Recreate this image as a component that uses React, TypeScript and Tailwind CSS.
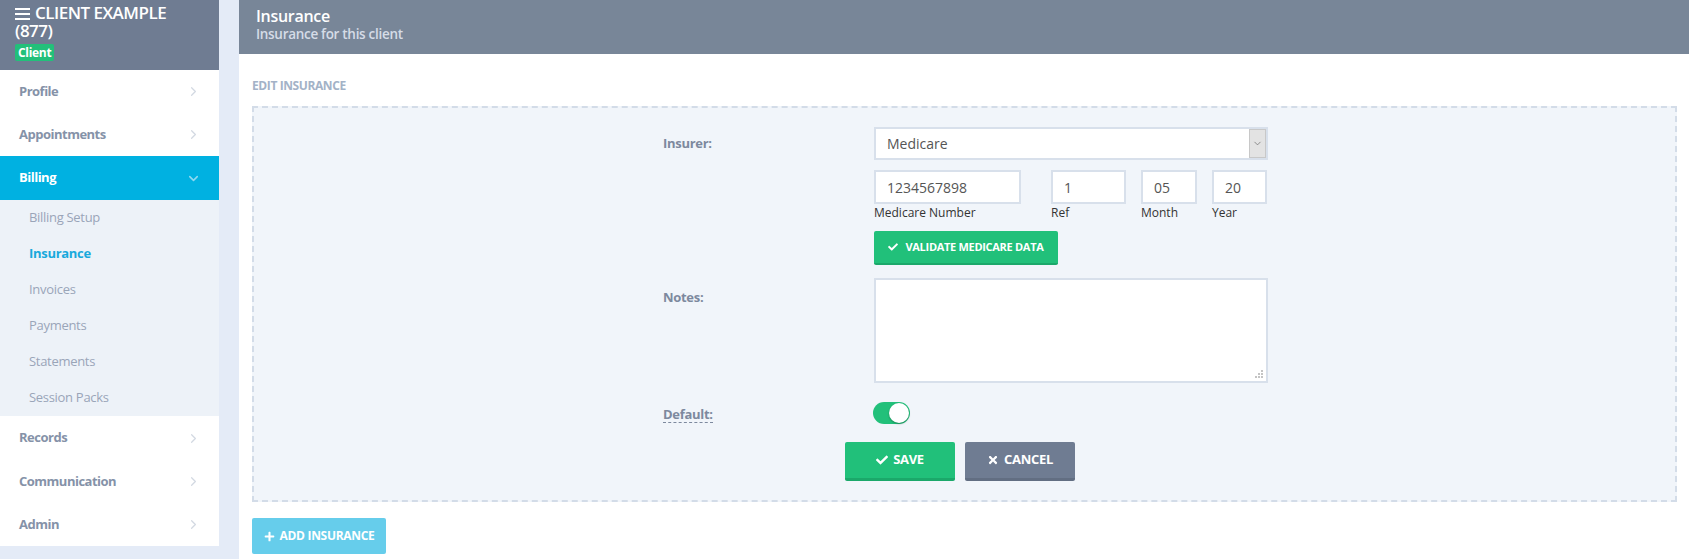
import React from "react";
import { ChevronRight, ChevronDown } from "lucide-react";
import { FaCheck, FaTimes, FaPlus } from "react-icons/fa";

const font = { fontFamily: '"Open Sans", "Noto Sans", sans-serif' };

function NavItem({ label, h }: { label: string; h: string }) {
  return (
    <div className={`flex items-center justify-between pl-[19px] pr-[18px] bg-white ${h}`}>
      <span className="text-[13px] font-bold text-[#8592a8] tracking-[-0.5px]">{label}</span>
      <ChevronRight size={15} strokeWidth={2} className="text-[#d3d9e2]" />
    </div>
  );
}

function SubItem({ label, active }: { label: string; active?: boolean }) {
  return (
    <div className="flex items-center h-[36px] pl-[29px]">
      <span
        className={`text-[13px] tracking-[-0.3px] ${active ? "font-bold text-[#19a9dc]" : "text-[#9aa5b8]"}`}
      >
        {label}
      </span>
    </div>
  );
}

export default function App() {
  return (
    <div className="flex w-[1689px] h-[559px] bg-[#e4ebf7] overflow-hidden" style={font}>
      {/* Sidebar */}
      <div className="w-[219px] flex flex-col shrink-0">
        <div className="h-[70px] bg-[#6f7c92] pl-[15px] pt-[4px]">
          <div className="flex items-center h-[18px]">
            <svg width="15" height="13" viewBox="0 0 15 13" className="mr-[5px] shrink-0">
              <rect x="0" y="1" width="15" height="2" fill="#fff" />
              <rect x="0" y="6" width="15" height="2" fill="#fff" />
              <rect x="0" y="11" width="15" height="2" fill="#fff" />
            </svg>
            <span className="text-white text-[17px] leading-[18px] font-semibold tracking-[-0.5px]">CLIENT EXAMPLE</span>
          </div>
          <div className="text-white text-[17px] leading-[17px] font-semibold tracking-[-0.5px]">(877)</div>
          <div className="mt-[5px] inline-block bg-[#22c07a] text-white text-[12px] font-bold leading-[17px] px-[3px] rounded-[2px] tracking-[-0.3px]">
            Client
          </div>
        </div>
        <NavItem label="Profile" h="h-[43px]" />
        <NavItem label="Appointments" h="h-[43px]" />
        <div className="h-[44px] bg-[#00b1e1] flex items-center justify-between pl-[19px] pr-[18px]">
          <span className="text-[13px] font-bold text-white tracking-[-0.5px]">Billing</span>
          <ChevronDown size={15} strokeWidth={2.5} className="text-[#8fd9f0]" />
        </div>
        <div className="bg-[#edf2f8]">
          <SubItem label="Billing Setup" />
          <SubItem label="Insurance" active />
          <SubItem label="Invoices" />
          <SubItem label="Payments" />
          <SubItem label="Statements" />
          <SubItem label="Session Packs" />
        </div>
        <NavItem label="Records" h="h-[44px]" />
        <NavItem label="Communication" h="h-[43px]" />
        <NavItem label="Admin" h="h-[43px]" />
      </div>

      {/* Main */}
      <div className="ml-[20px] flex-1 bg-white flex flex-col">
        <div className="h-[54px] bg-[#788698] pl-[17px] pt-[6px]">
          <div className="text-white text-[16px] font-semibold leading-[20px] tracking-[-0.3px]">Insurance</div>
          <div className="text-[#d5dce7] text-[13.5px] font-semibold leading-[16px] tracking-[-0.3px]">
            Insurance for this client
          </div>
        </div>
        <div className="pl-[13px] pr-[12px]">
          <div className="h-[52px] flex items-center pt-[12px]">
            <span className="text-[12px] font-bold text-[#a3b2c7] tracking-[-0.4px]">EDIT INSURANCE</span>
          </div>
          <div className="border-2 border-dashed border-[#d3dce8] bg-[#f1f5fa] pt-[19px] pb-[19px] flex justify-center">
            <div className="w-[605px] ml-[2px] flex flex-col">
              {/* Insurer */}
              <div className="flex">
                <div className="w-[211px] flex items-center h-[33px]">
                  <span className="text-[13px] font-bold text-[#7d899e] tracking-[-0.3px]">Insurer:</span>
                </div>
                <div className="w-[394px] flex flex-col">
                  <div className="h-[33px] border-2 border-[#d8e0eb] bg-white flex items-center">
                    <span className="flex-1 pl-[11px] text-[14px] text-[#555]">Medicare</span>
                    <div className="w-[17px] h-[29px] bg-[#e3e3e3] border border-[#c8c8c8] flex items-center justify-center">
                      <ChevronDown size={11} strokeWidth={1.5} className="text-[#666]" />
                    </div>
                  </div>
                  <div className="flex mt-[10px]">
                    <div className="w-[147px]">
                      <div className="h-[34px] border-2 border-[#d8e0eb] bg-white flex items-center pl-[11px] text-[14px] text-[#555]">
                        1234567898
                      </div>
                      <div className="text-[12px] text-[#333] leading-[18px]">Medicare Number</div>
                    </div>
                    <div className="w-[75px] ml-[30px]">
                      <div className="h-[34px] border-2 border-[#d8e0eb] bg-white flex items-center pl-[11px] text-[14px] text-[#555]">
                        1
                      </div>
                      <div className="text-[12px] text-[#333] leading-[18px]">Ref</div>
                    </div>
                    <div className="w-[56px] ml-[15px]">
                      <div className="h-[34px] border-2 border-[#d8e0eb] bg-white flex items-center pl-[11px] text-[14px] text-[#555]">
                        05
                      </div>
                      <div className="text-[12px] text-[#333] leading-[18px]">Month</div>
                    </div>
                    <div className="w-[55px] ml-[15px]">
                      <div className="h-[34px] border-2 border-[#d8e0eb] bg-white flex items-center pl-[11px] text-[14px] text-[#555]">
                        20
                      </div>
                      <div className="text-[12px] text-[#333] leading-[18px]">Year</div>
                    </div>
                  </div>
                  <div className="mt-[9px]">
                    <button className="h-[34px] w-[184px] bg-[#21c07a] border-b-2 border-[#1ba86a] rounded-[2px] text-white text-[11px] font-bold flex items-center justify-center gap-[7px] tracking-[-0.3px]">
                      <FaCheck size={10} />
                      VALIDATE MEDICARE DATA
                    </button>
                  </div>
                </div>
              </div>
              {/* Notes */}
              <div className="flex mt-[13px]">
                <div className="w-[211px] pt-[6px]">
                  <span className="text-[13px] font-bold text-[#7d899e] tracking-[-0.3px]">Notes:</span>
                </div>
                <div className="w-[394px] h-[105px] border-2 border-[#d8e0eb] bg-white relative">
                  <svg className="absolute right-[3px] bottom-[3px]" width="8" height="8" viewBox="0 0 8 8">
                    <rect x="6" y="0" width="2" height="2" fill="#c4c4c4" />
                    <rect x="6" y="3" width="2" height="2" fill="#c4c4c4" />
                    <rect x="3" y="3" width="2" height="2" fill="#c4c4c4" />
                    <rect x="6" y="6" width="2" height="2" fill="#c4c4c4" />
                    <rect x="3" y="6" width="2" height="2" fill="#c4c4c4" />
                    <rect x="0" y="6" width="2" height="2" fill="#c4c4c4" />
                  </svg>
                </div>
              </div>
              {/* Default */}
              <div className="flex mt-[18px] items-center">
                <div className="w-[211px]">
                  <span className="text-[13px] font-bold text-[#7d899e] tracking-[-0.3px] border-b border-dashed border-[#7d899e] leading-[16px] inline-block">
                    Default:
                  </span>
                </div>
                <div className="w-[37px] h-[22px] rounded-full bg-[#22c07a] relative -ml-[1px]">
                  <div className="absolute right-[1px] top-[1px] w-[20px] h-[20px] rounded-full bg-white shadow-[0_1px_2px_rgba(0,0,0,0.3)]" />
                </div>
              </div>
              {/* Buttons */}
              <div className="flex mt-[17px] ml-[-11px] justify-center gap-[10px]">
                <button className="w-[110px] h-[39px] bg-[#21c07a] border-b-[3px] border-[#1ba86a] rounded-[2px] text-white text-[13px] font-bold flex items-center justify-center gap-[5px] tracking-[-0.3px]">
                  <FaCheck size={12} />
                  SAVE
                </button>
                <button className="w-[110px] h-[39px] bg-[#6f7c92] border-b-[3px] border-[#626e82] rounded-[2px] text-white text-[13px] font-bold flex items-center justify-center gap-[5px] tracking-[-0.3px]">
                  <FaTimes size={12} />
                  CANCEL
                </button>
              </div>
            </div>
          </div>
          <div className="mt-[16px]">
            <button className="w-[134px] h-[36px] bg-[#66cdeb] rounded-[2px] text-white text-[12px] font-bold flex items-center justify-center gap-[5px] tracking-[-0.3px]">
              <FaPlus size={11} />
              ADD INSURANCE
            </button>
          </div>
        </div>
      </div>
    </div>
  );
}
